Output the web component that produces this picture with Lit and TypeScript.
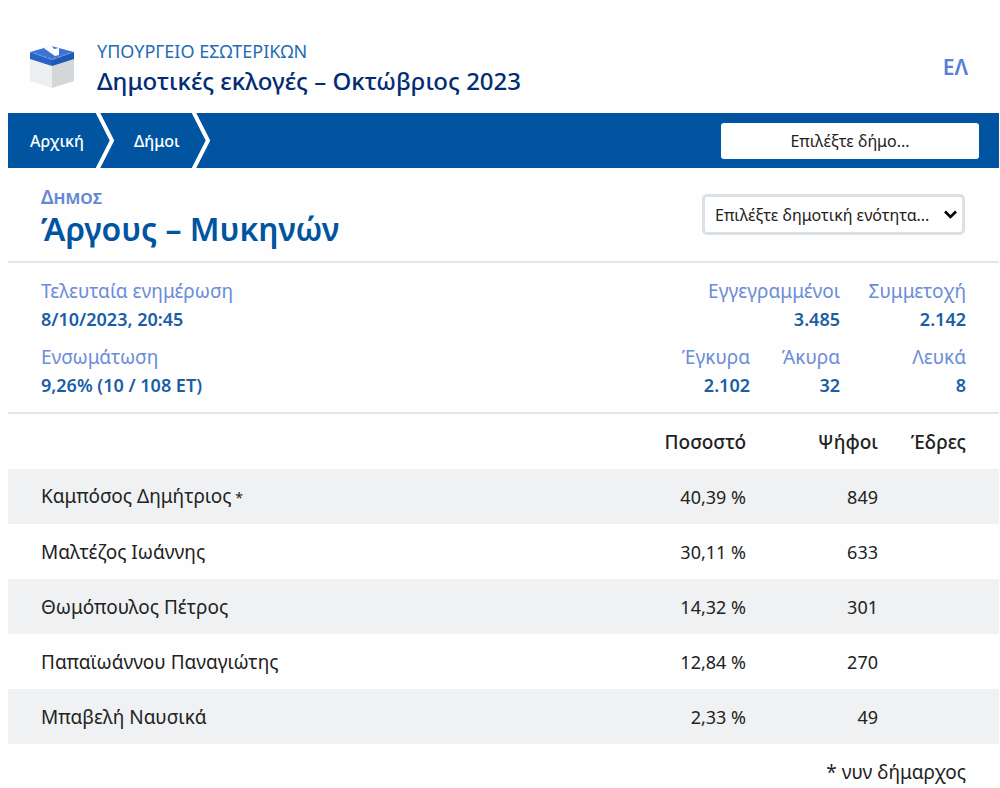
import { LitElement, html, css, svg } from "lit";
import { customElement } from "lit/decorators.js";

interface Candidate {
  name: string;
  share: string;
  votes: string;
  seats: string;
  incumbent?: boolean;
}

const candidates: Candidate[] = [
  { name: "Καμπόσος Δημήτριος", share: "40,39 %", votes: "849", seats: "", incumbent: true },
  { name: "Μαλτέζος Ιωάννης", share: "30,11 %", votes: "633", seats: "" },
  { name: "Θωμόπουλος Πέτρος", share: "14,32 %", votes: "301", seats: "" },
  { name: "Παπαϊωάννου Παναγιώτης", share: "12,84 %", votes: "270", seats: "" },
  { name: "Μπαβελή Ναυσικά", share: "2,33 %", votes: "49", seats: "" },
];

const ballotBox = svg`
  <polygon points="1,13 23,20 23,44 1,37" fill="#eceef0" />
  <polygon points="23,20 45,13 45,37 23,44" fill="#d3d7da" />
  <polygon points="1,8 22,2 45,8 23,16" fill="#3b74d4" />
  <polygon points="1,8 23,16 23,22 1,15" fill="#2563c4" />
  <polygon points="23,16 45,8 45,15 23,22" fill="#2058b6" />
  <path d="M5 9 L23 15 L41 9" fill="none" stroke="#6f9be6" stroke-width="1" stroke-dasharray="3 2" />
  <polygon points="15,4 22,1 25,5 30,4 30,11 26,12 16,5" fill="#fefefe" />
`;

const shared = css`
  *,
  *::before {
    box-sizing: border-box;
  }
`;

@customElement("site-header")
class SiteHeader extends LitElement {
  static styles = [
    shared,
    css`
      :host {
        display: block;
      }
      .header {
        display: flex;
        align-items: center;
        height: 93px;
        padding: 0 31px 0 21px;
      }
      .logo {
        width: 46px;
        height: 45px;
        margin-right: 22px;
      }
      .titles {
        flex: 1;
      }
      .ministry {
        margin: 0;
        font-size: 18px;
        line-height: 28px;
        color: #1f6cb5;
      }
      .title {
        margin: 0;
        font-size: 24px;
        line-height: 32px;
        font-weight: 500;
        color: #032d73;
      }
      .lang {
        font-size: 21px;
        font-weight: 600;
        color: #577fd9;
        text-decoration: none;
      }
    `,
  ];

  render() {
    return html`
      <header class="header">
        <svg class="logo" viewBox="0 0 46 45" aria-hidden="true">${ballotBox}</svg>
        <div class="titles">
          <p class="ministry">ΥΠΟΥΡΓΕΙΟ ΕΣΩΤΕΡΙΚΩΝ</p>
          <h1 class="title">Δημοτικές εκλογές – Οκτώβριος 2023</h1>
        </div>
        <a class="lang" href="#el">ΕΛ</a>
      </header>
    `;
  }
}

@customElement("crumb-bar")
class CrumbBar extends LitElement {
  static styles = [
    shared,
    css`
      :host {
        display: block;
      }
      .bar {
        display: flex;
        align-items: center;
        justify-content: space-between;
        height: 55px;
        padding: 0 20px 0 2px;
        background: #0054a0;
      }
      .crumbs {
        display: flex;
        margin: 0;
        padding: 0;
        list-style: none;
      }
      .crumb {
        display: flex;
        align-items: center;
        padding-left: 20px;
      }
      .link {
        margin-right: 12px;
        font-size: 16px;
        font-weight: 500;
        color: #fff;
        text-decoration: none;
      }
      .chevron {
        width: 18px;
        height: 55px;
      }
      .picker {
        appearance: none;
        width: 258px;
        height: 36px;
        padding: 0;
        border: 0;
        border-radius: 3px;
        background: #fff;
        color: #222;
        font-family: inherit;
        font-size: 16px;
        text-align: center;
        text-align-last: center;
      }
    `,
  ];

  render() {
    const crumbs = ["Αρχική", "Δήμοι"];
    return html`
      <nav class="bar">
        <ol class="crumbs">
          ${crumbs.map(
            (label) => html`
              <li class="crumb">
                <a class="link" href="#">${label}</a>
                <svg class="chevron" viewBox="0 0 18 55" aria-hidden="true">
                  <path d="M1 -2 L16 27.5 L1 57" fill="none" stroke="#fff" stroke-width="4" />
                </svg>
              </li>
            `
          )}
        </ol>
        <select class="picker" aria-label="Δήμος">
          <option>Επιλέξτε δήμο...</option>
        </select>
      </nav>
    `;
  }
}

@customElement("place-heading")
class PlaceHeading extends LitElement {
  static styles = [
    shared,
    css`
      :host {
        display: block;
      }
      .place {
        display: flex;
        align-items: center;
        justify-content: space-between;
        height: 95px;
        padding: 0 34px 0 33px;
        border-bottom: 2px solid #e1e5e9;
      }
      .titles {
        padding-top: 4px;
      }
      .kind {
        margin: 0;
        font-size: 19px;
        line-height: 24px;
        font-weight: 600;
        font-variant: small-caps;
        color: #6487d6;
      }
      .name {
        margin: 0;
        font-size: 32px;
        line-height: 40px;
        font-weight: 600;
        color: #0054a0;
      }
      .field {
        position: relative;
        display: flex;
        align-items: center;
      }
      .unit {
        appearance: none;
        width: 263px;
        height: 41px;
        padding: 0 30px 0 10px;
        border: 3px solid #d9e0e6;
        border-radius: 5px;
        background: #fff;
        color: #222;
        font-family: inherit;
        font-size: 16px;
      }
      .arrow {
        position: absolute;
        right: 8px;
        width: 13px;
        height: 9px;
        pointer-events: none;
      }
    `,
  ];

  render() {
    return html`
      <section class="place">
        <div class="titles">
          <p class="kind">Δημος</p>
          <h2 class="name">Άργους – Μυκηνών</h2>
        </div>
        <div class="field">
          <select class="unit" aria-label="Δημοτική ενότητα">
            <option>Επιλέξτε δημοτική ενότητα...</option>
          </select>
          <svg class="arrow" viewBox="0 0 13 9" aria-hidden="true">
            <path d="M1 1.5 L6.5 7 L12 1.5" fill="none" stroke="#000" stroke-width="2.6" />
          </svg>
        </div>
      </section>
    `;
  }
}

@customElement("turnout-summary")
class TurnoutSummary extends LitElement {
  static styles = [
    shared,
    css`
      :host {
        display: block;
      }
      .summary {
        display: flex;
        flex-direction: column;
        gap: 10px;
        padding: 14px 33px 13px;
        border-bottom: 2px solid #e1e5e9;
      }
      .line {
        display: flex;
        margin: 0;
        text-align: right;
      }
      .lead {
        flex: 1;
        text-align: left;
      }
      .medium {
        width: 90px;
      }
      .wide {
        width: 126px;
      }
      .label,
      .value {
        margin: 0;
        line-height: 28px;
        white-space: nowrap;
      }
      .label {
        font-size: 19px;
        color: #6b8cd8;
      }
      .value {
        font-size: 18px;
        font-weight: 600;
        color: #1a5fa6;
      }
    `,
  ];

  private stat(size: string, label: string, value: string) {
    return html`
      <div class=${size}>
        <dt class="label">${label}</dt>
        <dd class="value">${value}</dd>
      </div>
    `;
  }

  render() {
    return html`
      <section class="summary">
        <dl class="line">
          ${this.stat("lead", "Τελευταία ενημέρωση", "8/10/2023, 20:45")}
          ${this.stat("double", "Εγγεγραμμένοι", "3.485")}
          ${this.stat("wide", "Συμμετοχή", "2.142")}
        </dl>
        <dl class="line">
          ${this.stat("lead", "Ενσωμάτωση", "9,26% (10 / 108 ΕΤ)")}
          ${this.stat("medium", "Έγκυρα", "2.102")}
          ${this.stat("medium", "Άκυρα", "32")}
          ${this.stat("wide", "Λευκά", "8")}
        </dl>
      </section>
    `;
  }
}

@customElement("results-table")
class ResultsTable extends LitElement {
  static styles = [
    shared,
    css`
      :host {
        display: block;
      }
      .results {
        width: 100%;
        border-collapse: collapse;
        table-layout: fixed;
        line-height: 28px;
        color: #222;
      }
      .results th,
      .results td {
        height: 55px;
        padding: 0;
        text-align: right;
        font-weight: 400;
        white-space: nowrap;
      }
      .results th {
        font-size: 19px;
      }
      .results td {
        font-size: 18px;
      }
      .results thead th {
        font-weight: 500;
      }
      .results .name {
        padding-left: 33px;
        text-align: left;
      }
      .results .share {
        width: 120px;
      }
      .results .votes {
        width: 132px;
      }
      .results .seats {
        width: 121px;
        padding-right: 33px;
      }
      .results tbody tr:nth-child(odd) {
        background: #eff1f3;
      }
      .mark {
        font-size: 14px;
      }
      .note {
        margin: 0;
        padding: 14px 33px 0;
        font-size: 19px;
        line-height: 28px;
        text-align: right;
        color: #222;
      }
    `,
  ];

  render() {
    return html`
      <table class="results">
        <thead>
          <tr>
            <td class="name"></td>
            <th class="share" scope="col">Ποσοστό</th>
            <th class="votes" scope="col">Ψήφοι</th>
            <th class="seats" scope="col">Έδρες</th>
          </tr>
        </thead>
        <tbody>
          ${candidates.map(
            (c) => html`
              <tr>
                <th class="name" scope="row">
                  ${c.name}${c.incumbent ? html`<span class="mark"> *</span>` : ""}
                </th>
                <td class="share">${c.share}</td>
                <td class="votes">${c.votes}</td>
                <td class="seats">${c.seats}</td>
              </tr>
            `
          )}
        </tbody>
      </table>
      <p class="note">* νυν δήμαρχος</p>
    `;
  }
}

@customElement("app-root")
class AppRoot extends LitElement {
  static styles = css`
    :host {
      display: block;
      min-height: 100vh;
      box-sizing: border-box;
      padding: 20px 1px 0 8px;
      background: #fefefe;
      font-family: "Noto Sans", "Open Sans", sans-serif;
    }
  `;

  render() {
    return html`
      <site-header></site-header>
      <crumb-bar></crumb-bar>
      <main>
        <place-heading></place-heading>
        <turnout-summary></turnout-summary>
        <results-table></results-table>
      </main>
    `;
  }
}
